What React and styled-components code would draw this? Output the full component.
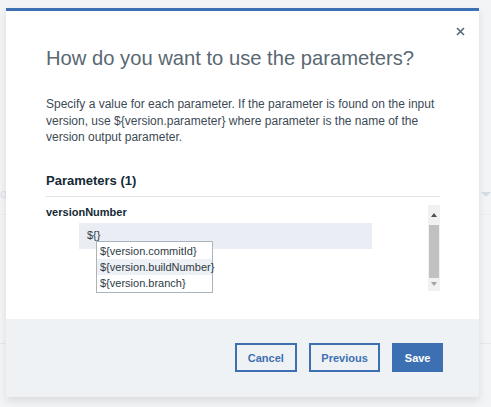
import React from 'react';
import styled, { createGlobalStyle } from 'styled-components';

const blue = '#3d70b2';
const slate = '#5a6872';
const ink = '#152935';

const GlobalStyle = createGlobalStyle`
  html, body {
    margin: 0;
    padding: 0;
    background: #f3f4f6;
    font-family: "Liberation Sans", Arial, sans-serif;
  }
`;

const Page = styled.div`
  width: 491px;
  height: 407px;
  position: relative;
  overflow: hidden;
  background: #f3f4f6;
`;

const BackdropRow = styled.div`
  margin-top: 174px;
  height: 40px;
  border-bottom: 1px solid #eceef1;
  display: flex;
  align-items: center;
  justify-content: space-between;
  color: #dde1e6;
  font-size: 12px;
`;

const BackdropLine = styled.div`
  margin-top: 128px;
  border-top: 1px solid #e6e8eb;
`;

const Caret = styled.span`
  width: 0;
  height: 0;
  border-left: 5px solid transparent;
  border-right: 5px solid transparent;
  border-top: 5px solid #d6dde6;
`;

const Modal = styled.div`
  position: absolute;
  left: 6px;
  top: 8px;
  width: 473px;
  height: 389px;
  box-sizing: border-box;
  border-top: 3px solid ${blue};
  background: #fff;
  box-shadow: 0 4px 8px rgba(0, 0, 0, 0.1);
  display: flex;
  flex-direction: column;
`;

const Body = styled.div`
  flex: 1;
  position: relative;
  padding: 34px 39px 0 40px;
`;

const Close = styled.button`
  position: absolute;
  top: 12px;
  right: 11px;
  width: 16px;
  height: 16px;
  padding: 0;
  border: none;
  background: none;
  display: flex;
  align-items: center;
  justify-content: center;
`;

const Title = styled.h2`
  margin: 0;
  font-size: 20.2px;
  font-weight: 400;
  line-height: 26px;
  color: ${slate};
`;

const Desc = styled.p`
  margin: 25px 0 0;
  font-size: 12px;
  line-height: 16.5px;
  color: #3d4a55;
`;

const SectionTitle = styled.h3`
  margin: 26px 0 0;
  font-size: 13px;
  font-weight: 700;
  line-height: 18px;
  color: ${ink};
  padding-bottom: 6px;
  border-bottom: 1px solid #e0e4e8;
`;

const ParamArea = styled.div`
  margin-top: 8px;
  display: flex;
  height: 86px;
`;

const ParamList = styled.div`
  flex: 1;
`;

const ParamName = styled.div`
  font-size: 11px;
  font-weight: 700;
  line-height: 14px;
  color: ${ink};
`;

const Field = styled.div`
  position: relative;
  margin: 4px 0 0 33px;
  width: 293px;
  height: 26px;
  background: #eaeef4;
  box-sizing: border-box;
  padding: 6px 8px;
  font-size: 11px;
  color: #2d3a45;
`;

const Suggestions = styled.ul`
  position: absolute;
  left: 17px;
  top: 18px;
  margin: 0;
  padding: 1px 0;
  list-style: none;
  width: 117px;
  box-sizing: border-box;
  background: #fff;
  border: 1px solid #a9b4bf;
`;

const Suggestion = styled.li`
  height: 16px;
  line-height: 16px;
  padding: 0 3px;
  font-size: 11px;
  color: #2d3a45;
  background: ${(p) => (p.$active ? '#edf0f4' : 'transparent')};
  white-space: nowrap;
`;

const Scrollbar = styled.div`
  width: 12px;
  display: flex;
  flex-direction: column;
  background: #f1f1f1;
`;

const ScrollArrow = styled.div`
  height: ${(p) => p.$h}px;
  display: flex;
  align-items: center;
  justify-content: center;
`;

const Thumb = styled.div`
  flex: 1;
  margin: 0 1px;
  background: #c1c1c1;
`;

const Footer = styled.div`
  height: 78px;
  background: #eff2f5;
  display: flex;
  justify-content: flex-end;
  align-items: flex-start;
  gap: 12px;
  padding: 24px 36px 0 0;
  box-sizing: border-box;
`;

const Button = styled.button`
  height: 29px;
  padding: 0 ${(p) => p.$pad}px;
  box-sizing: border-box;
  border: 2px solid ${blue};
  background: ${(p) => (p.$primary ? blue : 'transparent')};
  color: ${(p) => (p.$primary ? '#fff' : blue)};
  font-family: "Liberation Sans", Arial, sans-serif;
  font-size: 11px;
  font-weight: 700;
`;

const suggestions = ['${version.commitId}', '${version.buildNumber}', '${version.branch}'];

export default function App() {
  return (
    <Page>
      <GlobalStyle />
      <BackdropRow>
        <span>ou</span>
        <Caret />
      </BackdropRow>
      <BackdropLine />
      <Modal>
        <Body>
          <Close aria-label="Close">
            <svg width="9" height="9" viewBox="0 0 9 9">
              <path d="M1 1 L8 8 M8 1 L1 8" stroke={slate} strokeWidth="1.6" />
            </svg>
          </Close>
          <Title>How do you want to use the parameters?</Title>
          <Desc>
            {'Specify a value for each parameter. If the parameter is found on the input version, use ${version.parameter} where parameter is the name of the version output parameter.'}
          </Desc>
          <SectionTitle>Parameters (1)</SectionTitle>
          <ParamArea>
            <ParamList>
              <ParamName>versionNumber</ParamName>
              <Field>
                {'${}'}
                <Suggestions>
                  {suggestions.map((s, i) => (
                    <Suggestion key={s} $active={i === 1}>
                      {s}
                    </Suggestion>
                  ))}
                </Suggestions>
              </Field>
            </ParamList>
            <Scrollbar>
              <ScrollArrow $h={20}>
                <svg width="6" height="4" viewBox="0 0 6 4">
                  <path d="M0 4 L3 0 L6 4 Z" fill="#505050" />
                </svg>
              </ScrollArrow>
              <Thumb />
              <ScrollArrow $h={13}>
                <svg width="6" height="4" viewBox="0 0 6 4">
                  <path d="M0 0 L3 4 L6 0 Z" fill="#a3a3a3" />
                </svg>
              </ScrollArrow>
            </Scrollbar>
          </ParamArea>
        </Body>
        <Footer>
          <Button $pad={11}>Cancel</Button>
          <Button $pad={10.5}>Previous</Button>
          <Button $pad={10.5} $primary>
            Save
          </Button>
        </Footer>
      </Modal>
    </Page>
  );
}
